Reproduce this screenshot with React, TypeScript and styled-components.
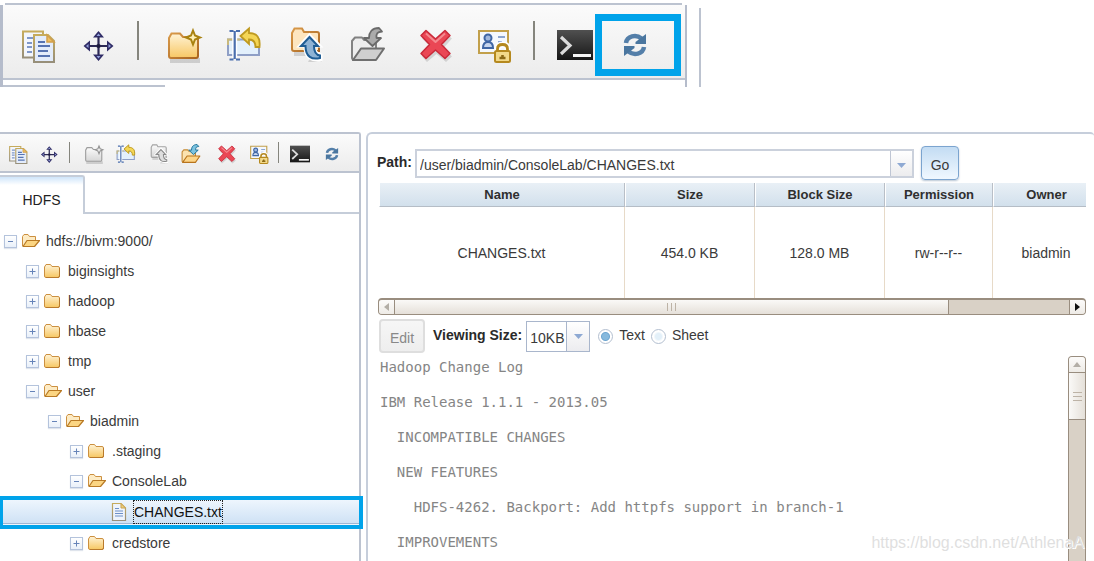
import React, { useState } from "react";
import styled, { createGlobalStyle, css } from "styled-components";

const sans = `"Liberation Sans", Arial, Helvetica, sans-serif`;
const mono = `"DejaVu Sans Mono", "Liberation Mono", monospace`;
const line = "#bcc3d0";
const accent = "#00a3ea";

const GlobalStyle = createGlobalStyle`
  *, *::before, *::after { box-sizing: border-box; }
  body { margin: 0; background: #fff; color: #3a3a3a; font: 14px/18px ${sans}; }
  button, input, select { font: inherit; color: inherit; margin: 0; }
  button { padding: 0; cursor: pointer; }
`;

const Page = styled.div`
  position: relative;
  display: flex;
  flex-direction: column;
  height: 100vh;
  overflow: hidden;
`;

/* ---------- enlarged toolbar strip ---------- */

const Strip = styled.header`
  display: flex;
  gap: 12px;
  padding-top: 3px;
  margin-bottom: 45px;
`;

const StripPanel = styled.div`
  flex: 0 1 687px;
`;

const StripTop = styled.div`
  height: 2px;
  margin: 0 5px;
  background: ${line};
`;

const StripBody = styled.div`
  border: solid #b5bccb;
  border-width: 0 2px 0 3px;
`;

const StripTail = styled.div`
  width: 162px;
  height: 2px;
  margin-top: 5px;
  background: ${line};
`;

const StripEdge = styled.div`
  width: 2px;
  margin-top: 5px;
  background: ${line};
`;

/* ---------- toolbar ---------- */

const Toolbar = styled.div<{ $large?: boolean }>`
  display: grid;
  align-items: start;
  background: linear-gradient(#fbfbfb, #ececec);
  border-bottom: 2px solid ${line};
  ${(p) =>
    p.$large
      ? css`
          height: 75px;
          padding: 16px 0 0 17px;
          grid-template-columns: 60px 58px 28px 60px 62px 62px 68px 58px 58px 23px 60px 1fr;
        `
      : css`
          height: 39px;
          padding: 8px 0 0 8px;
          grid-template-columns: 31px 30px 15px 32px 33px 32px 36px 32px 29px 12px 32px 1fr;
        `}
`;

const Divider = styled.span<{ $large?: boolean }>`
  width: ${(p) => (p.$large ? 2 : 1)}px;
  height: ${(p) => (p.$large ? 39 : 21)}px;
  margin-left: ${(p) => (p.$large ? -1 : 0)}px;
  background: #85857d;
`;

const ToolButton = styled.button<{ $large?: boolean }>`
  position: relative;
  justify-self: start;
  width: ${(p) => (p.$large ? 36 : 20)}px;
  height: ${(p) => (p.$large ? 36 : 20)}px;
  margin-top: ${(p) => (p.$large ? 6 : 2)}px;
  border: 0;
  background: none;

  svg {
    display: block;
    width: 100%;
    height: 100%;
    overflow: visible;
  }
`;

const Marker = styled.span`
  position: absolute;
  left: -22px;
  top: -13px;
  width: 86px;
  height: 62px;
  border: 7px solid ${accent};
`;

/* ---------- workspace ---------- */

const Workspace = styled.div`
  display: flex;
  flex: 1;
  gap: 5px;
  min-height: 0;
`;

const Sidebar = styled.aside`
  position: relative;
  flex: 0 0 361px;
  display: flex;
  flex-direction: column;
  border: solid ${line};
  border-width: 2px 2px 0 0;
  border-top-right-radius: 3px;
`;

const TabBar = styled.div`
  display: flex;
  height: 41px;
  padding-top: 2px;

  &::after {
    content: "";
    flex: 1;
    border-bottom: 2px solid #c5cdd9;
  }
`;

const Tab = styled.button`
  width: 85px;
  padding-top: 8px;
  border: solid #c5cdd9;
  border-width: 2px 2px 0 0;
  border-top-right-radius: 3px;
  background: linear-gradient(#cfe5fa, #fff 8px);
  color: #222;
`;

const Tree = styled.ul`
  list-style: none;
  margin: 0;
  padding: 12px 0 0;
`;

const Row = styled.li<{ $depth: number; $selected?: boolean }>`
  position: relative;
  display: flex;
  align-items: center;
  height: ${(p) => (p.$selected ? 32 : 30)}px;
  padding-left: ${(p) => 4 + p.$depth * 22}px;
  ${(p) =>
    p.$selected &&
    css`
      color: #111;
      background: linear-gradient(#f3f9ff, #cfe2f5 27px, #9fb6d3 27px, #9fb6d3 28px, #eef5fc 28px);

      &::after {
        content: "";
        position: absolute;
        inset: 0 -4px -1px 0;
        border: 4px solid ${accent};
        border-left-width: 3px;
      }
    `}
`;

const Expander = styled.button`
  width: 13px;
  height: 13px;
  margin-right: 5px;
  border: 1px solid #b4c3dc;
  background: linear-gradient(#fff, #e9f0f9);
  box-shadow: 0 1px 1px #dfe4ec;

  svg {
    display: block;
  }
`;

const ExpanderSpace = styled.span`
  width: 13px;
  margin-right: 5px;
`;

const NodeIcon = styled.svg`
  width: 18px;
  height: 18px;
  margin-right: 6px;
`;

const NodeLabel = styled.span<{ $focused?: boolean }>`
  ${(p) =>
    p.$focused &&
    css`
      padding: 2px 0;
      outline: 1px dotted #222;
    `}
`;

/* ---------- main panel ---------- */

const Main = styled.main`
  flex: 1;
  min-width: 0;
  display: flex;
  flex-direction: column;
  padding: 12px 8px 0 9px;
  border: solid #c6cedb;
  border-width: 2px 0 0 2px;
  border-radius: 6px 4px 0 0;
`;

const FormRow = styled.div`
  display: flex;
  align-items: center;
  height: 34px;
`;

const Label = styled.label`
  font-weight: bold;
  color: #2a2a2a;
  padding-bottom: 3px;
`;

const Combo = styled.div`
  display: flex;
  flex: 0 1 499px;
  height: 29px;
  margin: 0 7px 0 3px;
  border: 2px solid #cbd1dc;
`;

const ComboInput = styled.input`
  flex: 1;
  min-width: 0;
  padding: 3px 0 0 3px;
  border: 0;
  outline: 0;
  background: none;
`;

const ComboButton = styled.button`
  width: 22px;
  border: 0;
  border-left: 1px solid #bfc6d4;
  background: linear-gradient(#fff, #ececee);
`;

const PushButton = styled.button<{ $primary?: boolean }>`
  height: 34px;
  padding-top: 3px;
  border-radius: 4px;
  ${(p) =>
    p.$primary
      ? css`
          width: 38px;
          border: 1px solid #7ba4cf;
          background: linear-gradient(#c3dcf3, #f0f8ff);
          box-shadow: 0 1px 2px #b9c6d4;
        `
      : css`
          width: 46px;
          border: 2px solid #dedede;
          background: linear-gradient(#f6f6f6, #eee);
          color: #888;
        `}
`;

const TableWrap = styled.div`
  margin: 3px 0 0 2px;
  overflow: hidden;
`;

const Table = styled.table`
  width: calc(100% + 14px);
  table-layout: fixed;
  border-collapse: separate;
  border-spacing: 0;
  text-align: center;

  th {
    height: 24px;
    padding: 0;
    font-size: 13px;
    color: #2f2f2f;
    background: linear-gradient(#e9f0f6, #d2e0ec);
    border-bottom: 1px solid #b5bdc6;
    border-right: 1px solid #b9bfc7;
    border-left: 1px solid #fff;
  }

  td {
    height: 91px;
    padding: 0;
    border-right: 1px solid #e7dac8;
  }
`;

const ScrollBar = styled.div<{ $vertical?: boolean }>`
  display: flex;
  flex: none;
  flex-direction: ${(p) => (p.$vertical ? "column" : "row")};
  background: #d9d1c6;
  border: 1px solid #998d7f;
  ${(p) =>
    p.$vertical
      ? css`
          width: 18px;
          margin-top: 3px;
          border-bottom: 0;
          border-radius: 4px 4px 0 0;
        `
      : css`
          height: 17px;
          margin-left: 1px;
          border-top-width: 2px;
          border-radius: 4px;
        `}
`;

const ScrollArrow = styled.button<{ $end?: boolean; $vertical?: boolean }>`
  display: grid;
  place-items: center;
  flex: 0 0 16px;
  margin-left: ${(p) => (p.$end ? "auto" : 0)};
  border: 0 solid #998d7f;
  border-width: ${(p) => (p.$vertical ? "0 0 1px 0" : p.$end ? "0 0 0 1px" : "0 1px 0 0")};
  border-radius: ${(p) => (p.$vertical ? "3px 3px 0 0" : p.$end ? "0 3px 3px 0" : "3px 0 0 3px")};
  background: linear-gradient(#fcfbfa, #eeebe6);
`;

const ScrollThumb = styled.div<{ $vertical?: boolean }>`
  display: grid;
  place-items: center;
  flex: 0 0 ${(p) => (p.$vertical ? "47px" : "calc(100% - 152px)")};
  border: 0 solid #998d7f;
  border-width: ${(p) => (p.$vertical ? "0 0 1px 0" : "0 1px 0 0")};
  background: linear-gradient(${(p) => (p.$vertical ? "to right," : "")} #faf9f7, #e5e0d9);
`;

const Options = styled(FormRow)`
  margin: 4px 0 0 2px;
  gap: 8px;
`;

const SizeField = styled.span`
  position: relative;
  display: flex;
  width: 64px;
  height: 31px;
  margin-left: -4px;
  border: 1px solid #a9b6cc;
`;

const SizeSelect = styled.select`
  appearance: none;
  width: 100%;
  padding: 4px 0 0 3px;
  border: 0;
  outline: 0;
  background: linear-gradient(#fff, #ececef) right / 22px 100% no-repeat;
`;

const SizeArrow = styled.span`
  position: absolute;
  inset: 0 0 0 auto;
  width: 23px;
  display: grid;
  place-items: center;
  border-left: 1px solid #a9b6cc;
  pointer-events: none;
`;

const Choices = styled.div`
  display: flex;
  gap: 6px;
  padding-bottom: 2px;
`;

const Choice = styled.label`
  display: flex;
  align-items: flex-end;
  gap: 6px;
`;

const Radio = styled.input`
  appearance: none;
  width: 15px;
  height: 15px;
  border: 1px solid #b3bfd0;
  border-radius: 50%;
  background: radial-gradient(circle, #e3f0f9 0 3px, #fff 5px);

  &:checked {
    background: radial-gradient(circle, #86b9dd 0 3px, #6da5d0 4px, #fff 5px);
  }
`;

const Viewer = styled.div`
  display: flex;
  flex: 1;
  min-height: 0;
`;

const Log = styled.div`
  flex: 1;
  min-width: 0;
  padding: 6px 0 0 3px;
  overflow: hidden;
  color: #858585;
  font: 14px/17px ${mono};
  white-space: pre;

  p {
    margin: 0 0 18px;
  }
`;

const Watermark = styled.div`
  position: absolute;
  right: 10px;
  bottom: 8px;
  color: #dfdfdf;
  font-size: 16px;
  line-height: 20px;
  text-shadow: 1px 1px 0 #fff;
  pointer-events: none;
`;

/* ---------- icons, all on a 36 x 36 grid ---------- */

type Tone = "color" | "gray";

const Gradients = styled.svg`
  position: absolute;
  width: 0;
  height: 0;
`;

const GradientDefs = () => (
  <Gradients aria-hidden="true">
    <defs>
      <linearGradient id="gold" x1="0" y1="0" x2="0" y2="1">
        <stop offset="0" stopColor="#fff3d6" />
        <stop offset="1" stopColor="#f7c763" />
      </linearGradient>
      <linearGradient id="silver" x1="0" y1="0" x2="0" y2="1">
        <stop offset="0" stopColor="#fbfbfb" />
        <stop offset="1" stopColor="#d6d6d6" />
      </linearGradient>
      <linearGradient id="rim" x1="0" y1="0" x2="1" y2="1">
        <stop offset="0" stopColor="#d99a4a" />
        <stop offset="1" stopColor="#a8641f" />
      </linearGradient>
      <linearGradient id="sheet" x1="0" y1="0" x2="0" y2="1">
        <stop offset="0" stopColor="#c6ab5c" />
        <stop offset="1" stopColor="#978f7a" />
      </linearGradient>
      <linearGradient id="ink" x1="0" y1="0" x2="0" y2="1">
        <stop offset="0" stopColor="#505050" />
        <stop offset="1" stopColor="#161616" />
      </linearGradient>
    </defs>
  </Gradients>
);

const CopyIcon = () => (
  <svg viewBox="0 0 36 36" fill="none">
    <path d="M3 4.500H23V30.500H3Z" fill="#f3f6fc" stroke="url(#sheet)" strokeWidth="2" />
    <path d="M7 11h6M7 16h5M7 20h5M7 25h5" stroke="#7f97c8" strokeWidth="2" />
    <path d="M14 8H28L34 14V35H14Z" fill="#e3ecfb" stroke="url(#sheet)" strokeWidth="2" />
    <path d="M27 8V15H34Z" fill="#efbf62" stroke="#d2a04c" strokeWidth="1.500" />
    <path d="M18 15h7M18 19h12M18 24h10M18 29h12" stroke="#5673b2" strokeWidth="2" />
  </svg>
);

const MoveIcon = () => (
  <svg viewBox="0 0 36 36">
    <path d="M18.500 9V29M8.500 19H28.500" stroke="#2d2a55" strokeWidth="2.200" />
    <path
      d="M18.500 4l5.500 6.500H13ZM18.500 34l5.500-6.500H13ZM3.500 19l6.500-5.500V24.500ZM33.500 19L27 13.500V24.500Z"
      fill="#2f2c66"
    />
    <path d="M18.500 6.500l2 2.500h-4ZM18.500 31.500l2-2.500h-4ZM6 19l2.500-2v4ZM31 19l-2.500-2v4Z" fill="#94a2dc" />
    <path d="M16.800 17.300h3.400v3.400h-3.400Z" fill="#1c1a3d" />
  </svg>
);

const NewFolderIcon = ({ tone = "color" }: { tone?: Tone }) => {
  const c = tone === "color";
  return (
    <svg viewBox="0 0 36 36">
      <path d="M4 36H34V31H4Z" fill="#000" opacity=".14" />
      <path
        d="M3 11L5.500 6.500H14L17 10H30Q32 10 32 12V29Q32 31 30 31H5Q3 31 3 29Z"
        fill={c ? "url(#gold)" : "url(#silver)"}
        stroke={c ? "url(#rim)" : "#9d9d9d"}
        strokeWidth="2"
      />
      <path
        d="M27 3.500L29 8.500 34 10.500 29 12.500 27 17.500 25 12.500 20 10.500 25 8.500Z"
        fill={c ? "#fff0b5" : "#f4f4f4"}
        stroke={c ? "#a98210" : "#939393"}
        strokeWidth="2"
      />
    </svg>
  );
};

const RenameIcon = () => (
  <svg viewBox="0 0 36 36" fill="none">
    <path d="M2 12.500H33V28H2Z" fill="#e3f0fc" stroke="#8f9fc6" strokeWidth="2" />
    <path d="M2 18V12.500H14" stroke="#c9b97c" strokeWidth="2" />
    <path d="M8.700 5V31" stroke="#fff" strokeWidth="5" />
    <path d="M3.500 4H7.500M10 4H14M8.700 4V32M3.500 32.500H7.500M10 32.500H14" stroke="#4a6fae" strokeWidth="2.200" />
    <path
      d="M14.500 9L23 1.500V6C31 6 34.500 10.500 33.500 20H29.500C29.500 15 27.500 12.500 23 12.500V17Z"
      fill="#f4d656"
      stroke="#bf9a20"
      strokeWidth="1.800"
    />
  </svg>
);

const FolderUpIcon = ({ tone = "color" }: { tone?: Tone }) => {
  const c = tone === "color";
  return (
    <svg viewBox="0 0 36 36">
      <path d="M6 25H20V29H6ZM22 31H34V35H20Z" fill="#000" opacity=".13" />
      <path
        d="M4 6L6.500 1.500H14L16 5H29Q31 5 31 7V24H6Q4 24 4 22Z"
        fill={c ? "#fde6c0" : "url(#silver)"}
        stroke={c ? "url(#rim)" : "#a3a3a3"}
        strokeWidth="2"
      />
      <path
        d="M21.500 8L32 19H26.500C26.500 24 28 27 33 28V33C24 34 16.500 31 17 19H11.500Z"
        fill="#fff"
        stroke="#fff"
        strokeWidth="3"
      />
      <path
        d="M21.500 10L30 19H26C26 25 28 28 32 28.500V31C24 33 17.500 30 17.500 19H13Z"
        fill={c ? "#8fb3d4" : "#dedede"}
        stroke={c ? "#1f5d94" : "#8a8a8a"}
        strokeWidth="2"
      />
    </svg>
  );
};

const ImportIcon = ({ tone = "color" }: { tone?: Tone }) => {
  const c = tone === "color";
  return (
    <svg viewBox="0 0 36 36" strokeLinejoin="round">
      <path
        d="M2 31V14L5 10.500H12L14 13H26V21L10 33H3Z"
        fill={c ? "#fbe3b0" : "#ededed"}
        stroke={c ? "#c58a35" : "#828282"}
        strokeWidth="2"
      />
      <path
        d="M3 33L11 21.500H34L26 33Z"
        fill={c ? "#fdd588" : "#cfcfcf"}
        stroke={c ? "#b8741d" : "#6f6f6f"}
        strokeWidth="2"
      />
      <path
        d="M29 1C22 1 19 5 19 11H14L22.500 19 31 11H26.500C26 6 27.500 5 32 4.500Z"
        fill={c ? "#7cc3e0" : "#ababab"}
        stroke={c ? "#23769c" : "#6a6a6a"}
        strokeWidth="1.800"
      />
    </svg>
  );
};

const DeleteIcon = () => (
  <svg viewBox="0 0 36 36" strokeLinejoin="round">
    <path
      d="M9 6.500L18.500 15 28 6.500 34 11.500 26 20.500 34 29.500 28 35 18.500 27 9 35 4 29.500 13 20.500 4 11.500Z"
      fill="#000"
      opacity=".12"
    />
    <path
      d="M8 3.500L17.500 12 27 3.500 32 8.500 23.500 17.500 32 26.500 27 31.500 17.500 23 8 31.500 3 26.500 11.500 17.500 3 8.500Z"
      fill="#ea4755"
      stroke="#c92a3a"
      strokeWidth="1.500"
    />
    <path d="M8 6.500l9.500 8.500L27 6.500" fill="none" stroke="#f48a90" strokeWidth="2" />
  </svg>
);

const PermissionIcon = () => (
  <svg viewBox="0 0 36 36" fill="none">
    <path d="M3 4H32V26H3Z" fill="#f4f8fe" stroke="#c2a04b" strokeWidth="2" />
    <circle cx="12" cy="11" r="3.500" fill="#9fb7de" stroke="#3f66a5" strokeWidth="2" />
    <path d="M7 21C7 17 9 15 12 15S17 17 17 21Z" fill="#c6d5ee" stroke="#3f66a5" strokeWidth="2" />
    <path d="M22 10h7M22 15h4" stroke="#8ba5d0" strokeWidth="2" />
    <path d="M21.500 25V22Q21.500 17.500 26.500 17.500T31.500 22V25" stroke="#fff" strokeWidth="6" />
    <path d="M21.500 25V22Q21.500 17.500 26.500 17.500T31.500 22V25" stroke="#b5891f" strokeWidth="2.800" />
    <rect x="19" y="24" width="15" height="11" rx="1.500" fill="#f2d98a" stroke="#b5891f" strokeWidth="2" />
    <path d="M23.500 31h6M26.500 28v3" stroke="#8c6a16" strokeWidth="2.600" />
  </svg>
);

const TerminalIcon = () => (
  <svg viewBox="0 0 36 36" fill="none">
    <path d="M0 3H36V33H0Z" fill="url(#ink)" />
    <path d="M4 10L13 18.500 4 27" stroke="#dcdcdc" strokeWidth="3.200" />
    <path d="M16 28.500H34" stroke="#f5f5f5" strokeWidth="3" />
  </svg>
);

const RefreshIcon = () => (
  <svg viewBox="0 0 36 36" fill="none">
    <path d="M9 16C10 9 19 7 24.500 11.500" stroke="#547fa9" strokeWidth="4.500" />
    <path d="M29 7V17H18.500V15Z" fill="#4a769f" />
    <path d="M27 20C26 27 17 29 11.500 24.500" stroke="#547fa9" strokeWidth="4.500" />
    <path d="M7 29V19H17.500V21Z" fill="#4a769f" />
  </svg>
);

/* ---------- tree icons, on an 18 x 18 grid ---------- */

const FolderClosed = () => (
  <NodeIcon viewBox="0 0 18 18">
    <path
      d="M.500 5L2 2.500H6.500L8 4.500H14Q15.500 4.500 15.500 6V14Q15.500 15.500 14 15.500H2Q.500 15.500 .500 14Z"
      fill="url(#gold)"
      stroke="#cc9040"
    />
    <path d="M15.500 6V14Q15.500 15.500 14 15.500H2" fill="none" stroke="#b97a2c" />
  </NodeIcon>
);

const FolderOpen = () => (
  <NodeIcon viewBox="0 0 18 18" strokeLinejoin="round">
    <path d="M.500 14V4.500L2 2.500H6L7.500 4.500H13.500V8.500" fill="#fdebc4" stroke="#cc9040" />
    <path d="M1 14.500L5 8.500H17.500L12.500 14.500Z" fill="#fbd582" stroke="#b97a25" strokeWidth="1.200" />
  </NodeIcon>
);

const FileGlyph = () => (
  <NodeIcon viewBox="0 0 18 18">
    <path d="M2.500 .500H11L15.500 5V17.500H2.500Z" fill="#eef4fc" stroke="url(#sheet)" strokeWidth="1.200" />
    <path d="M11 .500V5H15.500Z" fill="#efcf7c" stroke="#c9a454" />
    <path d="M5 5.500h4M5 8h8M5 10.500h8M5 13h8" stroke="#6d90c8" />
  </NodeIcon>
);

const DownArrow = () => (
  <svg width="9" height="5" viewBox="0 0 9 5">
    <path d="M0 0H9L4.500 5Z" fill="#8ea9d3" />
  </svg>
);

/* ---------- composed parts ---------- */

function Tools({ large, children }: { large?: boolean; children?: React.ReactNode }) {
  const tone = (color: boolean): Tone => (color ? "color" : "gray");
  const items: ([string, React.ReactNode] | null)[] = [
    ["Copy", <CopyIcon />],
    ["Move", <MoveIcon />],
    null,
    ["Create directory", <NewFolderIcon tone={tone(!!large)} />],
    ["Rename", <RenameIcon />],
    ["Upload", <FolderUpIcon tone={tone(!!large)} />],
    ["Download", <ImportIcon tone={tone(!large)} />],
    ["Remove", <DeleteIcon />],
    ["Set permission", <PermissionIcon />],
    null,
    ["Open shell", <TerminalIcon />],
    ["Refresh", <RefreshIcon />],
  ];
  return (
    <Toolbar $large={large} role="toolbar">
      {items.map((item, i) =>
        item ? (
          <ToolButton key={i} $large={large} aria-label={item[0]}>
            {item[1]}
            {item[0] === "Refresh" && children}
          </ToolButton>
        ) : (
          <Divider key={i} $large={large} />
        )
      )}
    </Toolbar>
  );
}

type Kind = "open" | "closed" | "file";

const nodes: { name: string; depth: number; kind: Kind }[] = [
  { name: "hdfs://bivm:9000/", depth: 0, kind: "open" },
  { name: "biginsights", depth: 1, kind: "closed" },
  { name: "hadoop", depth: 1, kind: "closed" },
  { name: "hbase", depth: 1, kind: "closed" },
  { name: "tmp", depth: 1, kind: "closed" },
  { name: "user", depth: 1, kind: "open" },
  { name: "biadmin", depth: 2, kind: "open" },
  { name: ".staging", depth: 3, kind: "closed" },
  { name: "ConsoleLab", depth: 3, kind: "open" },
  { name: "CHANGES.txt", depth: 4, kind: "file" },
  { name: "credstore", depth: 3, kind: "closed" },
];

const icons: Record<Kind, React.ReactNode> = {
  open: <FolderOpen />,
  closed: <FolderClosed />,
  file: <FileGlyph />,
};

const columns = [
  { title: "Name", value: "CHANGES.txt", width: 246 },
  { title: "Size", value: "454.0 KB", width: 130 },
  { title: "Block Size", value: "128.0 MB", width: 130 },
  { title: "Permission", value: "rw-r--r--", width: 108 },
  { title: "Owner", value: "biadmin", width: undefined },
];

const log = [
  "Hadoop Change Log",
  "IBM Release 1.1.1 - 2013.05",
  "  INCOMPATIBLE CHANGES",
  "  NEW FEATURES",
  "    HDFS-4262. Backport: Add httpfs support in branch-1",
  "  IMPROVEMENTS",
];

export default function App() {
  const [path, setPath] = useState("/user/biadmin/ConsoleLab/CHANGES.txt");
  const [mode, setMode] = useState("Text");

  return (
    <Page>
      <GlobalStyle />
      <GradientDefs />
      <Strip>
        <StripPanel>
          <StripTop />
          <StripBody>
            <Tools large>
              <Marker />
            </Tools>
            <StripTail />
          </StripBody>
        </StripPanel>
        <StripEdge />
      </Strip>

      <Workspace>
        <Sidebar>
          <Tools />
          <TabBar>
            <Tab>HDFS</Tab>
          </TabBar>
          <Tree role="tree">
            {nodes.map((n) => {
              const file = n.kind === "file";
              return (
                <Row key={n.name} $depth={n.depth} $selected={file} role="treeitem" aria-selected={file}>
                  {file ? (
                    <ExpanderSpace />
                  ) : (
                    <Expander aria-label={`Toggle ${n.name}`}>
                      <svg width="11" height="11" viewBox="0 0 11 11">
                        <path
                          d={n.kind === "open" ? "M3 5.500H8" : "M2.500 5.500H8.500M5.500 2.500V8.500"}
                          stroke="#6583b8"
                        />
                      </svg>
                    </Expander>
                  )}
                  {icons[n.kind]}
                  <NodeLabel $focused={file}>{n.name}</NodeLabel>
                </Row>
              );
            })}
          </Tree>
        </Sidebar>

        <Main>
          <FormRow>
            <Label htmlFor="path">Path:</Label>
            <Combo>
              <ComboInput id="path" value={path} onChange={(e) => setPath(e.target.value)} />
              <ComboButton aria-label="Show recent paths">
                <DownArrow />
              </ComboButton>
            </Combo>
            <PushButton $primary>Go</PushButton>
          </FormRow>

          <TableWrap>
            <Table>
              <colgroup>
                {columns.map((c) => (
                  <col key={c.title} width={c.width} />
                ))}
              </colgroup>
              <thead>
                <tr>
                  {columns.map((c) => (
                    <th key={c.title}>{c.title}</th>
                  ))}
                </tr>
              </thead>
              <tbody>
                <tr>
                  {columns.map((c) => (
                    <td key={c.title}>{c.value}</td>
                  ))}
                </tr>
              </tbody>
            </Table>
          </TableWrap>

          <ScrollBar>
            <ScrollArrow aria-label="Scroll left">
              <svg width="5" height="8" viewBox="0 0 5 8">
                <path d="M5 0V8L0 4Z" fill="#b3aea6" />
              </svg>
            </ScrollArrow>
            <ScrollThumb>
              <svg width="9" height="8" viewBox="0 0 9 8">
                <path d="M.500 0V8M4.500 0V8M8.500 0V8" stroke="#bdb3a6" />
              </svg>
            </ScrollThumb>
            <ScrollArrow $end aria-label="Scroll right">
              <svg width="5" height="8" viewBox="0 0 5 8">
                <path d="M0 0V8L5 4Z" fill="#111" />
              </svg>
            </ScrollArrow>
          </ScrollBar>

          <Options>
            <PushButton>Edit</PushButton>
            <Label htmlFor="size">Viewing Size:</Label>
            <SizeField>
              <SizeSelect id="size" defaultValue="10KB">
                <option>10KB</option>
                <option>50KB</option>
              </SizeSelect>
              <SizeArrow>
                <DownArrow />
              </SizeArrow>
            </SizeField>
            <Choices>
              {["Text", "Sheet"].map((m) => (
                <Choice key={m}>
                  <Radio type="radio" name="mode" checked={mode === m} onChange={() => setMode(m)} />
                  {m}
                </Choice>
              ))}
            </Choices>
          </Options>

          <Viewer>
            <Log>
              {log.map((t) => (
                <p key={t}>{t}</p>
              ))}
            </Log>
            <ScrollBar $vertical>
              <ScrollArrow $vertical aria-label="Scroll up">
                <svg width="8" height="5" viewBox="0 0 8 5">
                  <path d="M0 5H8L4 0Z" fill="#b3aea6" />
                </svg>
              </ScrollArrow>
              <ScrollThumb $vertical>
                <svg width="9" height="9" viewBox="0 0 9 9">
                  <path d="M0 .500H9M0 4.500H9M0 8.500H9" stroke="#bdb3a6" />
                </svg>
              </ScrollThumb>
            </ScrollBar>
          </Viewer>
        </Main>
      </Workspace>

      <Watermark>https://blog.csdn.net/AthlenaA</Watermark>
    </Page>
  );
}
